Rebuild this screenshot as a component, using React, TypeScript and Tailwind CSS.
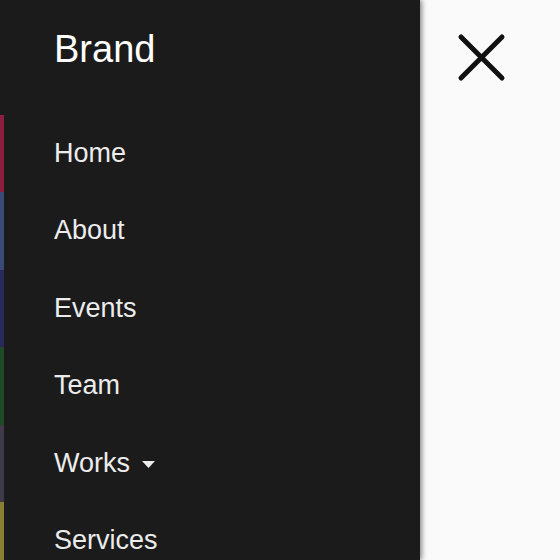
import React from "react";

const items = [
  { label: "Home", border: "border-[#8c1f3f]" },
  { label: "About", border: "border-[#3b4a75]" },
  { label: "Events", border: "border-[#27295a]" },
  { label: "Team", border: "border-[#1f4a27]" },
  { label: "Works", border: "border-[#3f3a48]", caret: true },
  { label: "Services", border: "border-[#8a7e32]" },
];

export default function App() {
  return (
    <div className="flex h-[560px] w-[560px] overflow-hidden bg-[#fafafa] font-['Liberation_Sans',Arial,sans-serif]">
      {/* Sidebar */}
      <aside className="relative z-10 flex h-full w-[420px] shrink-0 flex-col bg-[#1b1b1b] shadow-[2px_0_5px_rgba(0,0,0,0.45)]">
        <div className="h-[114.5px] shrink-0 pl-[54px] pt-[30px]">
          <span className="text-[38px] leading-none text-white">Brand</span>
        </div>
        <nav className="flex flex-col">
          {items.map((item) => (
            <a
              key={item.label}
              href="#"
              className={`flex h-[77.5px] shrink-0 items-center border-l-4 pl-[50px] text-[27px] leading-none text-[#ececec] ${item.border}`}
            >
              {item.label}
              {item.caret && (
                <svg width="13" height="7" viewBox="0 0 13 7" className="ml-[12px] mt-[2px]">
                  <polygon points="0,0 13,0 6.5,7" fill="#ececec" />
                </svg>
              )}
            </a>
          ))}
        </nav>
      </aside>

      {/* Close button area */}
      <div className="flex-1">
        <button className="ml-[37px] mt-[33px] flex h-[49px] w-[49px] items-center justify-center">
          <svg width="49" height="49" viewBox="0 0 49 49">
            <path d="M4 4 L45 45 M45 4 L4 45" stroke="#111" strokeWidth="5" strokeLinecap="round" />
          </svg>
        </button>
      </div>
    </div>
  );
}
